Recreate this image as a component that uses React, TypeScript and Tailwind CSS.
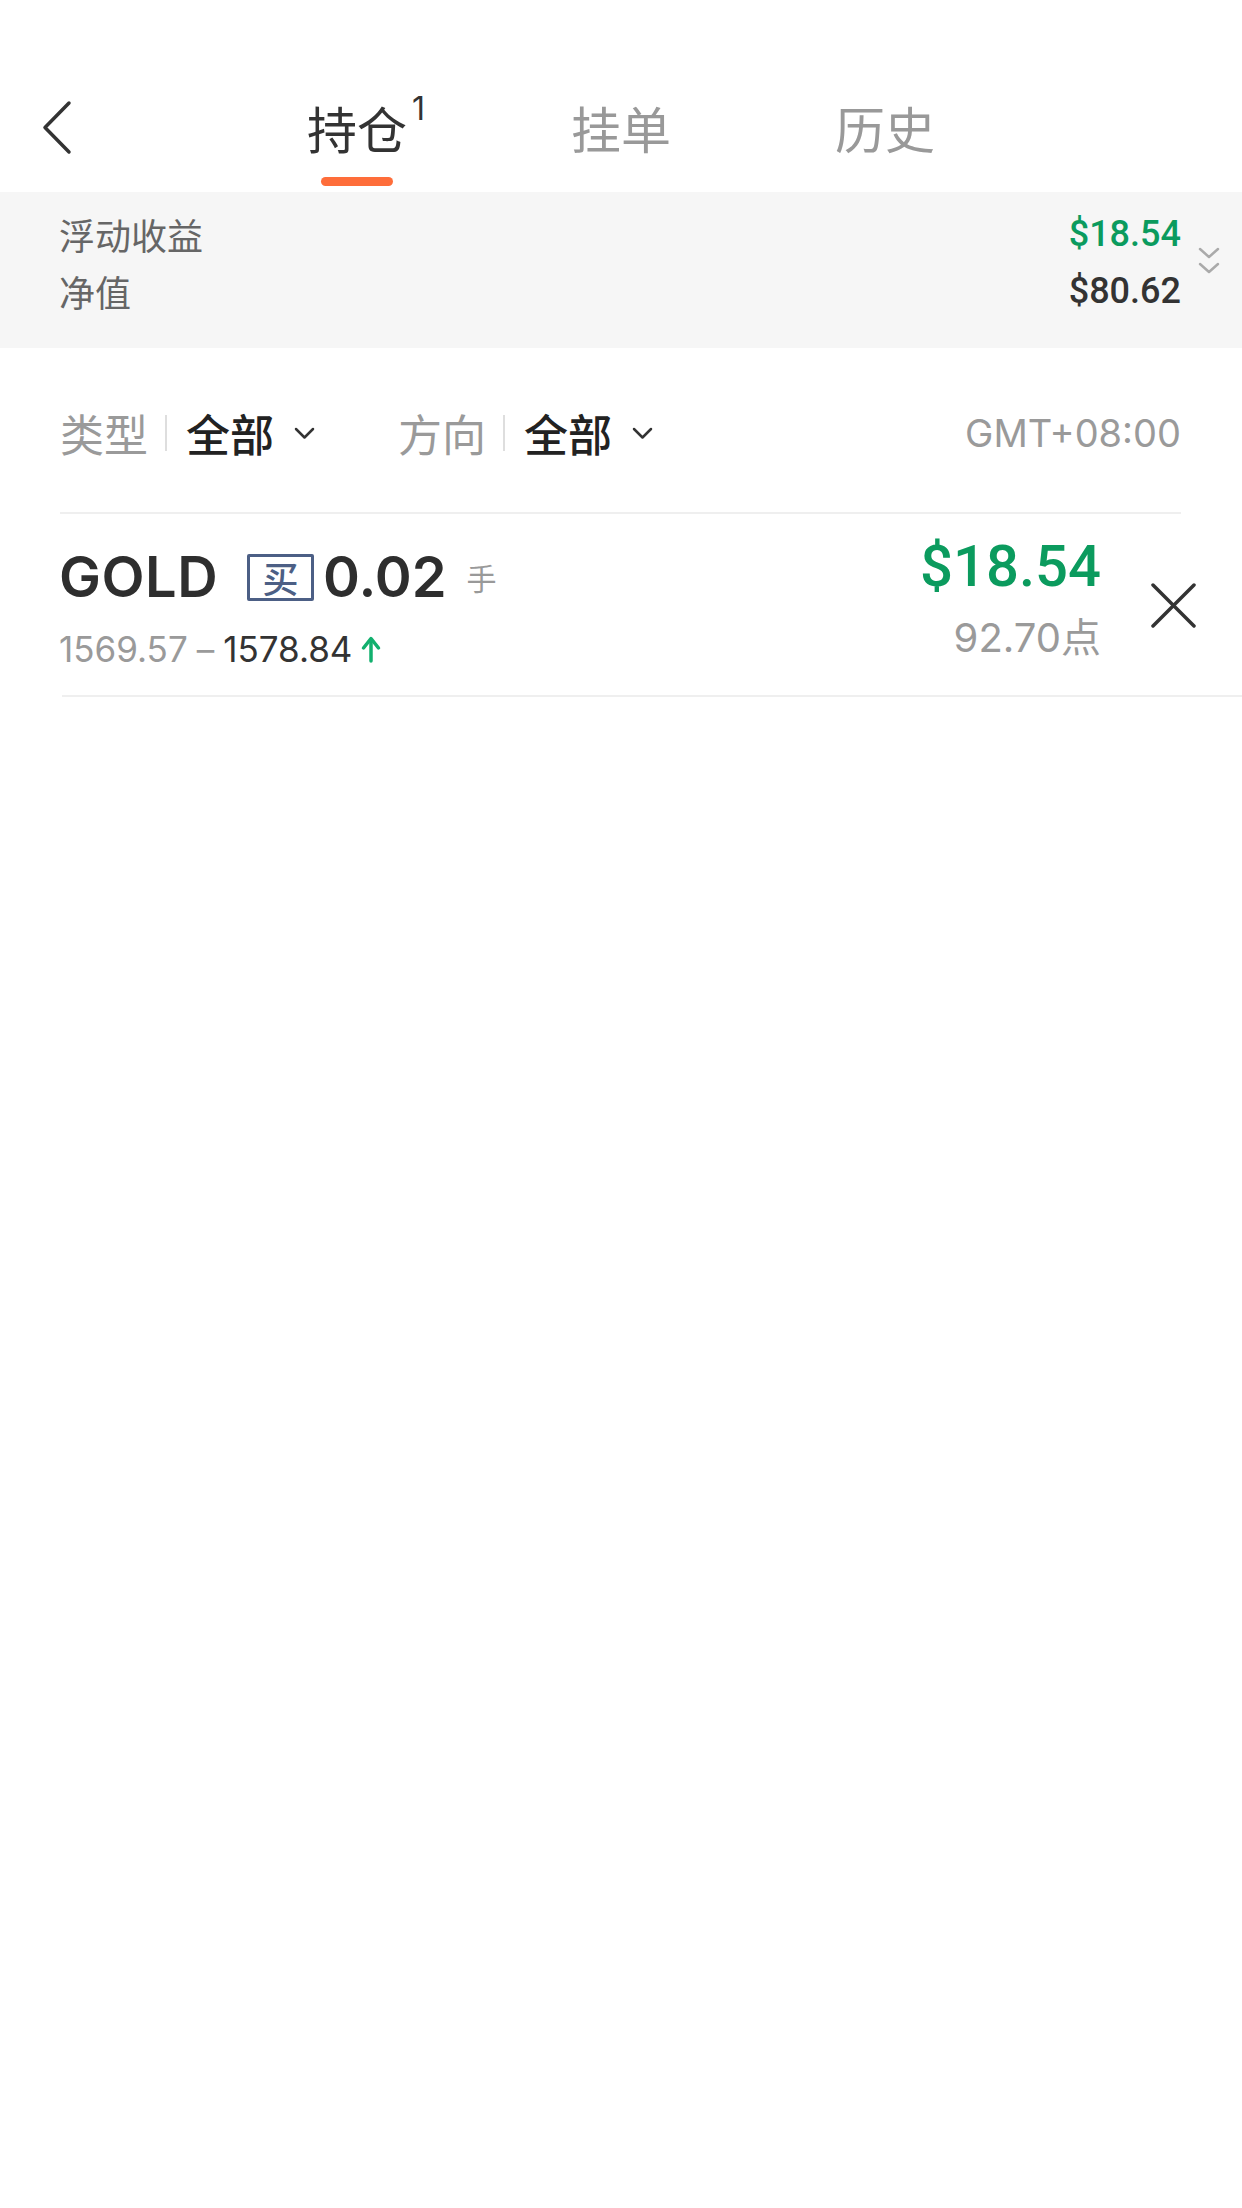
import React from "react";

const cjk = "font-['Noto_Sans_CJK_SC',sans-serif]";
const latin = "font-['Inter','Noto_Sans_CJK_SC',sans-serif]";
const din = "font-['Roboto','Noto_Sans_CJK_SC',sans-serif]";

const tabs = [
  { label: "持仓", count: 1, active: true },
  { label: "挂单", active: false },
  { label: "历史", active: false },
];

const Chevron = () => (
  <svg width="21" height="13" viewBox="0 0 21 13" fill="none">
    <path d="M2 2 L10.5 10.5 L19 2" stroke="#333" strokeWidth="2.5" strokeLinecap="round" strokeLinejoin="round" />
  </svg>
);

const Filter = ({ label, value }: { label: string; value: string }) => (
  <div className="flex items-center">
    <span className="text-[#9a9a9a]">{label}</span>
    <span className="ml-[17px] h-[36px] w-[2px] bg-[#dedede]" />
    <span className="ml-[19px] font-medium text-[#222]">{value}</span>
    <span className="ml-[20px] flex items-center">
      <Chevron />
    </span>
  </div>
);

export default function App() {
  return (
    <div className={`min-h-[2208px] w-[1242px] bg-white ${cjk}`}>
      {/* header */}
      <div className="mt-[60px] grid h-[132px] grid-cols-[1fr_auto_1fr]">
        <div className="pl-[40px] pt-[40px]">
          <svg width="34" height="56" viewBox="0 0 34 56" fill="none">
            <path d="M29 3 L5 27.5 L29 52" stroke="#333" strokeWidth="3.5" strokeLinecap="round" strokeLinejoin="round" />
          </svg>
        </div>
        <div className="flex">
          {tabs.map((t) => (
            <div key={t.label} className="flex w-[264px] flex-col items-center pt-[42px]">
              <div className={`relative text-[50px] leading-[50px] ${t.active ? "text-[#333]" : "text-[#999]"}`}>
                {t.label}
                {t.count ? (
                  <span className={`absolute left-full top-[-9px] ml-[5px] text-[32px] leading-none ${latin}`}>
                    {t.count}
                  </span>
                ) : null}
              </div>
              {t.active && <div className="mt-[25px] h-[9px] w-[72px] rounded-full bg-[#fe6d3a]" />}
            </div>
          ))}
        </div>
        <div />
      </div>

      {/* summary */}
      <div className="flex h-[156px] bg-[#f6f6f6] pl-[59px] pr-[22px] pt-[14px]">
        <div className="flex-1 text-[36px] leading-[57px] text-[#666]">
          <div>浮动收益</div>
          <div>净值</div>
        </div>
        <div className={`text-right text-[36px] font-medium leading-[57px] ${din}`}>
          <div className="text-[#0b9b5e]">$18.54</div>
          <div className="text-[#333]">$80.62</div>
        </div>
        <div className="ml-[17px] pt-[41px]">
          <svg width="22" height="28" viewBox="0 0 22 28" fill="none">
            <path d="M2 2 L11 10 L20 2" stroke="#aaa" strokeWidth="2.5" strokeLinecap="round" strokeLinejoin="round" />
            <path d="M2 17 L11 25 L20 17" stroke="#aaa" strokeWidth="2.5" strokeLinecap="round" strokeLinejoin="round" />
          </svg>
        </div>
      </div>

      {/* filters */}
      <div className="ml-[60px] mr-[61px] flex items-center border-b-2 border-[#efefef] pb-[49px] pt-[55px] text-[44px] leading-[60px]">
        <Filter label="类型" value="全部" />
        <div className="ml-[83px]">
          <Filter label="方向" value="全部" />
        </div>
        <div className={`ml-auto text-[38px] text-[#9a9a9a] ${latin}`}>GMT+08:00</div>
      </div>

      {/* position */}
      <div className="ml-[62px] flex items-start border-b-2 border-[#efefef] pb-[24px] pr-[45px] pt-[20px]">
        <div className={`-ml-[3px] mt-[11px] ${latin}`}>
          <div className="flex h-[64px] items-center">
            <span className="text-[56px] font-semibold tracking-[0.5px] text-[#2e2e2e]">GOLD</span>
            <span className={`ml-[29px] flex h-[47px] w-[67px] items-center justify-center rounded-[2px] border-[3px] border-[#4c5f85] text-[36px] font-medium leading-none text-[#4c5f85] ${cjk}`}>
              买
            </span>
            <span className="ml-[9px] text-[56px] font-semibold text-[#2e2e2e]">0.02</span>
            <span className={`ml-[20px] text-[30px] text-[#999] ${cjk}`}>手</span>
          </div>
          <div className="mt-[18px] flex h-[44px] items-center text-[35px]">
            <span className="text-[#9a9a9a]">1569.57</span>
            <span className="mx-[9px] text-[#9a9a9a]">–</span>
            <span className="text-[#333]">1578.84</span>
            <svg className="ml-[8px]" width="22" height="27" viewBox="0 0 22 27" fill="none">
              <path d="M11 25 L11 6" stroke="#12b06e" strokeWidth="3.5" strokeLinecap="round" />
              <path d="M3.5 12 L11 2.5 L18.5 12" stroke="#12b06e" strokeWidth="3.5" strokeLinecap="round" strokeLinejoin="round" />
            </svg>
          </div>
        </div>
        <div className="ml-auto text-right">
          <div className={`text-[58px] font-medium leading-[64px] text-[#0b9b5e] ${din}`}>$18.54</div>
          <div className={`mt-[18px] text-[40px] leading-[44px] text-[#9a9a9a] ${latin}`}>92.70点</div>
        </div>
        <div className="ml-[49px] mt-[49px]">
          <svg width="47" height="45" viewBox="0 0 47 45" fill="none">
            <path d="M3 2 L44 43 M44 2 L3 43" stroke="#333" strokeWidth="3.5" strokeLinecap="round" />
          </svg>
        </div>
      </div>
    </div>
  );
}
